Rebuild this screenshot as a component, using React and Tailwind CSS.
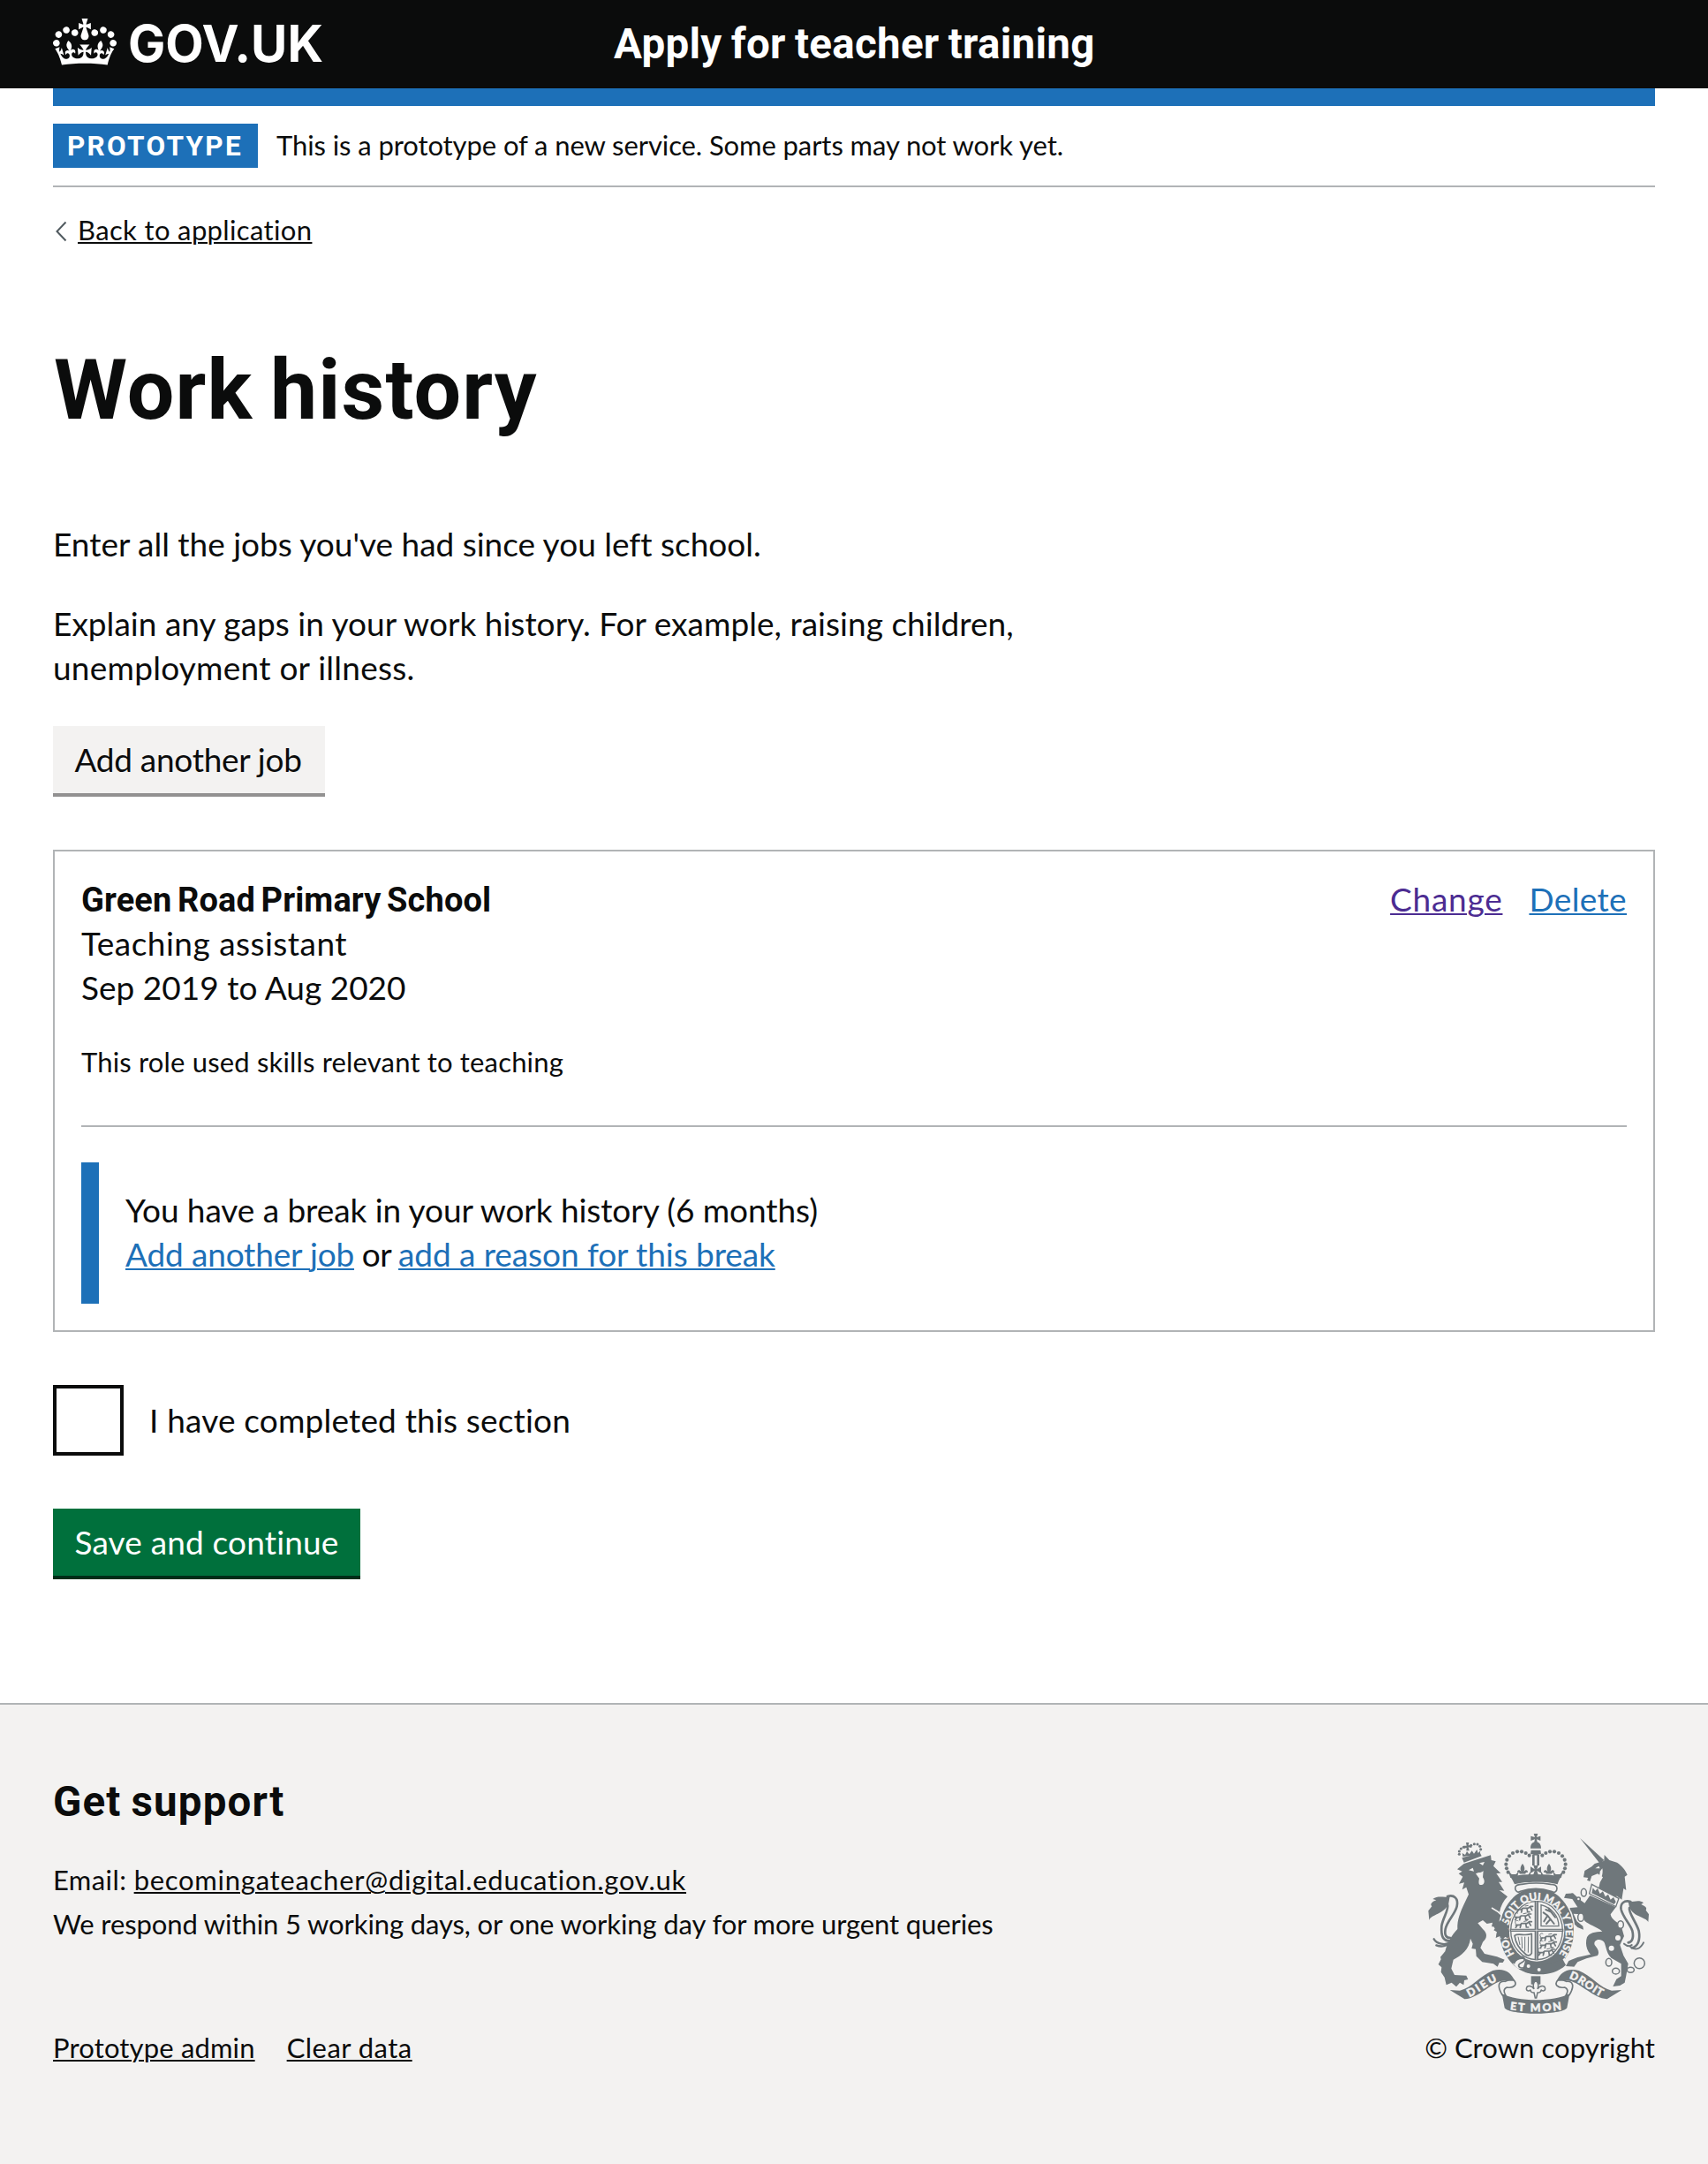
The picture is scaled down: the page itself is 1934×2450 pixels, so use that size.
import React from "react";

const INK = "#6f777b";
const PAPER = "#f3f2f1";

function CrownLogo() {
  return (
    <svg viewBox="0 0 132 97" className="mt-[21px] h-[53px] w-[72px] shrink-0" fill="currentColor" aria-hidden="true">
      <path
        fillRule="evenodd"
        d="M25 30.2c3.5 1.5 7.7-.2 9.1-3.7 1.5-3.6-.2-7.8-3.9-9.2-3.6-1.4-7.6.3-9.1 3.9-1.4 3.5.3 7.5 3.9 9zM9 39.5c3.6 1.5 7.8-.2 9.2-3.7 1.5-3.6-.2-7.8-3.9-9.1-3.6-1.5-7.6.2-9.1 3.8-1.4 3.5.3 7.5 3.8 9zM4.4 57.2c3.5 1.5 7.7-.2 9.1-3.8 1.5-3.6-.2-7.7-3.9-9.1-3.5-1.5-7.6.3-9.1 3.8-1.4 3.5.3 7.6 3.9 9.1zm38.3-21.4c3.5 1.5 7.7-.2 9.1-3.8 1.5-3.6-.2-7.7-3.9-9.1-3.6-1.5-7.6.3-9.1 3.8-1.3 3.6.4 7.7 3.9 9.1zm64.4-5.6c-3.6 1.5-7.8-.2-9.1-3.7-1.5-3.6.2-7.8 3.8-9.2 3.6-1.4 7.7.3 9.2 3.9 1.3 3.5-.4 7.5-3.9 9zm15.9 9.3c-3.6 1.5-7.7-.2-9.1-3.7-1.5-3.6.2-7.8 3.7-9.1 3.6-1.5 7.7.2 9.2 3.8 1.5 3.5-.3 7.5-3.8 9zm4.7 17.7c-3.6 1.5-7.8-.2-9.2-3.8-1.5-3.6.2-7.7 3.9-9.1 3.6-1.5 7.7.3 9.2 3.8 1.3 3.5-.4 7.6-3.9 9.1zM89.3 35.8c-3.6 1.5-7.8-.2-9.2-3.8-1.4-3.6.2-7.7 3.9-9.1 3.6-1.5 7.7.3 9.2 3.8 1.4 3.6-.3 7.7-3.9 9.1zM69.7 17.7l8.9 4.7V9.3l-8.9 2.8c-.2-.3-.5-.6-.9-.9L72.4 0H59.6l3.5 11.2c-.3.3-.6.5-.9.9l-8.8-2.8v13.1l8.8-4.7c.3.3.6.7.9.9l-5 15.4v.1c-.2.8-.4 1.6-.4 2.4 0 4.1 3.1 7.5 7 8.1h.2c.3 0 .7.1 1 .1.4 0 .7 0 1-.1h.2c4-.6 7.1-4.1 7.1-8.1 0-.8-.1-1.7-.4-2.4V34l-5.1-15.4c.4-.2.7-.6 1-.9zM66 92.8c16.9 0 32.8 1.1 47.1 3.2 4-16.9 8.9-26.7 14-33.5l-9.6-3.4c1 4.9 1.1 7.2 0 10.2-1.5-1.4-3-4.3-4.2-8.7L108.6 76c2.8-2 5-3.2 7.5-3.3-4.4 9.4-10 11.9-13.6 11.2-4.3-.8-6.3-4.6-5.6-7.9 1-4.7 5.7-5.9 8-.5 4.3-8.7-3-11.4-7.6-8.8 7.1-7.2 7.9-13.5 2.1-21.1-8 6.1-8.1 12.3-4.5 20.8-4.7-5.4-12.1-2.5-9.5 6.2 3.4-5.2 7.9-2 7.2 3.1-.6 4.3-6.4 7.8-13.5 7.2-10.3-.9-10.9-8-11.2-13.8 2.5-.5 7.1 1.8 11 7.3L80.2 60c-4.1 4.4-8 5.3-12.3 5.4 1.4-4.4 8-11.6 8-11.6H55.5s6.4 7.2 7.9 11.6c-4.2-.1-8-1-12.3-5.4l1.4 16.4c3.9-5.5 8.5-7.7 10.9-7.3-.3 5.8-.9 12.8-11.1 13.8-7.2.6-12.9-2.9-13.5-7.2-.7-5 3.8-8.3 7.1-3.1 2.7-8.7-4.6-11.6-9.4-6.2 3.7-8.5 3.6-14.7-4.6-20.8-5.8 7.6-5 13.9 2.2 21.1-4.7-2.6-11.9.1-7.7 8.8 2.3-5.5 7.1-4.2 8.1.5.7 3.3-1.3 7.1-5.7 7.9-3.5.7-9-1.8-13.5-11.2 2.5.1 4.7 1.3 7.5 3.3l-4.7-15.4c-1.2 4.4-2.7 7.2-4.3 8.7-1.1-3-.9-5.3 0-10.2l-9.5 3.4c5 6.9 9.9 16.7 14 33.5 14.8-2.1 30.8-3.2 47.7-3.2z"
      />
    </svg>
  );
}

/* Pearls along the arches of the large crown, left half; the right half is mirrored. */
const PEARLS = [[351, 196], [349, 182], [352, 167], [360, 154], [372, 144], [387, 139], [402, 139], [416, 144], [428, 152], [356, 209]];
const LION_CROWN_PEARLS = [[190, 148], [190, 138], [196, 129], [205, 124], [230, 118], [241, 113], [252, 114], [260, 121], [263, 131]];
const LINKS = [[613, 278, 9, 13], [603, 362, 10, 14], [738, 387, 10, 13], [698, 515, 10, 13], [722, 545, 12, 10], [772, 541, 12, 9], [802, 518, 18, 18], [595, 300, 6, 6]];

function Fleur({ x, y, s = 1 }) {
  return (
    <path
      transform={`translate(${x} ${y}) scale(${s})`}
      d="M0 -20C8 -10 8 -2 4 6C10 -2 18 0 17 9C14 6 10 8 9 13H-9C-10 8 -14 6 -17 9C-18 0 -10 -2 -4 6C-8 -2 -8 -10 0 -20Z"
    />
  );
}

function PassantLion({ x, y }) {
  return (
    <g transform={`translate(${x} ${y})`} fill="none" stroke={INK} strokeWidth="5" strokeLinecap="round">
      <path d="M-26 2h14l6-5h18l8-6h8M-20 2l-6 9M-8 0l-3 11M8 -3l2 13h7M18 -8l7 12" />
      <path d="M-26 -2c-6-8 2-14 8-10M2 -10l10-2" strokeWidth="3" />
    </g>
  );
}

function CoatOfArms() {
  return (
    <svg viewBox="84 78 750 612" className="h-[204px] w-[250px] overflow-visible" fill={INK} aria-hidden="true">
      <defs>
        <path id="garter" d="M378 487A98 112 0 1 1 518 500" />
        <path id="ribbon-left" d="M224 633C258 618 290 588 328 575" />
        <path id="ribbon-mid" d="M362 676Q450 688 538 676" />
        <path id="ribbon-right" d="M562 569C600 580 630 612 674 634" />
      </defs>

      {/* lion's tail */}
      <g fill="none" stroke={INK} strokeLinecap="round">
        <path strokeWidth="8" d="M150 291C172 284 188 298 182 325C176 352 150 372 143 402C139 424 146 432 160 432" />
        <path strokeWidth="8" d="M150 318C156 336 134 364 130 392C128 424 132 446 166 442" />
        <path strokeWidth="7" d="M104 436C112 450 140 462 166 444M112 457C130 464 150 458 164 446" />
      </g>
      <path d="M158 291C140 298 120 286 100 300L112 304C96 310 90 318 97 325L85 340L88 372C92 352 140 352 154 314Z" />

      {/* lion */}
      <path d="M183 199L206 180L250 166L297 151L299 168L314 172L306 188L331 212L316 213L336 242L324 242L343 272L326 270L354 292C340 306 331 324 327 344L346 368L358 396L353 432L345 428L336 436L329 424L316 430L318 412L307 406L316 394L300 394L303 380L284 384L270 372L253 382L270 402C288 418 284 434 270 446L262 466L276 486L318 496L344 506L338 516L326 516L320 530L306 520L268 514L248 494L246 470L232 468L236 452L228 434C224 470 198 492 170 506L163 536L174 558L214 560L220 573L207 576L205 592L192 584L180 598L164 584L146 592L140 566L128 548L130 532L119 522L128 505L126 497L142 478C150 446 164 424 184 402C182 372 194 344 206 318L222 284L214 260L200 268L207 244L189 248L202 224L188 214L200 206Z" />
      <path fill={PAPER} d="M222 202L236 194L240 206ZM258 178L276 174L270 186ZM246 214C256 208 266 212 272 204L270 226C280 240 274 254 264 252C254 252 256 240 258 230Z" />
      <path fill="none" stroke={PAPER} strokeWidth="5" d="M300 330C330 345 352 368 362 400" />

      {/* lion's crown */}
      <path d="M199 160L261 144L266 154L206 176ZM202 156L200 144L210 150L216 138L224 148L233 136L240 146L250 132L254 144L262 136L260 148Z" />
      <path d="M213 108H223L221 118L232 116V126L221 124L224 136H214L215 126L206 128V119L215 119Z" />
      {LION_CROWN_PEARLS.map(([x, y]) => <circle key={`${x}-${y}`} cx={x} cy={y} r="4.6" />)}

      {/* unicorn's tail */}
      <g fill="none" stroke={INK} strokeLinecap="round">
        <path strokeWidth="8" d="M772 309C750 302 736 316 740 336C746 362 770 384 778 408C784 434 776 446 764 448" />
        <path strokeWidth="8" d="M768 330C764 346 792 380 800 408C806 440 796 462 776 466" />
        <path strokeWidth="6" d="M816 448C806 468 790 478 768 460M750 452C762 462 770 462 776 456" />
      </g>
      <path d="M764 309C780 312 800 300 816 313L808 318C824 326 828 330 824 338L834 352L832 378C822 360 782 362 768 328Z" />

      {/* unicorn */}
      <path d="M600 93L682 168L668 180Z" />
      <path d="M612 226L616 204L640 190L650 180L682 170L683 150L700 168L726 176C744 188 756 204 761 218L752 224L757 270L748 264L742 302L726 290L712 292L690 276L664 262L668 244L678 226L660 214L640 222L634 240L624 236L628 228Z" />
      <path fill={PAPER} d="M652 196L664 188L668 196ZM676 196C680 214 672 240 654 252L648 250C660 240 668 220 668 206Z" />
      <path d="M634 288L722 328L704 352C706 372 732 378 742 398L750 426L736 456L748 492L764 520L757 560L752 584L736 594L712 597L724 572L740 562L740 520L706 500C688 480 690 462 682 446C668 430 644 440 650 456C660 468 668 480 660 492L622 502L592 514L580 530L552 528L562 510L592 498L636 488C620 470 618 448 624 430C630 414 652 412 676 410C658 394 628 386 616 374L606 352L578 350L590 376L610 392L612 404L592 396L570 374L560 352L566 330L592 328L574 300L546 296L552 282L576 280L600 302L616 314Z" />
      <path fill={PAPER} stroke={INK} strokeWidth="4" d="M640 250L732 298L722 326L632 282Z" />
      <path d="M644 262L652 272L660 264L668 282L678 274L686 292L696 284L704 302L714 294L722 310L716 318L640 280Z" />
      <circle cx="729" cy="432" r="9" fill={PAPER} />
      <circle cx="707" cy="467" r="9" fill={PAPER} />
      {LINKS.map(([x, y, rx, ry]) => <ellipse key={`${x}-${y}`} cx={x} cy={y} rx={rx} ry={ry} fill={PAPER} stroke={INK} strokeWidth="4.5" />)}

      {/* garter and shield */}
      <ellipse cx="453" cy="409" rx="131" ry="151" fill={PAPER} />
      <ellipse cx="453" cy="409" rx="126" ry="147" />
      <ellipse cx="453" cy="407" rx="94" ry="105" fill={PAPER} />
      <ellipse cx="453" cy="407" rx="88" ry="99" fill="none" stroke={INK} strokeWidth="4" />
      <path d="M446 306H459V508H446ZM362 401H544V411H362Z" />
      <path stroke={PAPER} strokeWidth="2" d="M452.500 308V506M366 406H540" />
      <PassantLion x={412} y={334} />
      <PassantLion x={406} y={360} />
      <PassantLion x={408} y={386} />
      <PassantLion x={492} y={430} />
      <PassantLion x={492} y={455} />
      <PassantLion x={486} y={480} />
      <path fill="none" stroke={INK} strokeWidth="4" d="M468 320V392H528C528 360 506 330 468 320Z" />
      <path fill="none" stroke={INK} strokeWidth="6" strokeLinecap="round" d="M476 346L490 356L512 384M490 356L478 376M500 368L486 384M484 336L502 344L516 362M502 344L494 332" />
      <path fill="none" stroke={INK} strokeWidth="5" strokeLinejoin="round" d="M378 424C392 414 412 428 436 418V484C430 496 418 492 414 486C396 472 382 452 378 424Z" />
      <path stroke={INK} strokeWidth="3" d="M390 428L396 456M402 428L404 468M413 428L413 478M425 428L424 482" />
      <path fill={PAPER} d="M372 520C396 496 420 502 412 520C470 540 520 520 548 500L556 512C520 548 440 552 404 536C384 540 384 530 372 520Z" />
      <path d="M414 512C460 534 510 522 540 502L552 524C510 564 440 562 404 542Z" />
      <path fill="none" stroke={INK} strokeWidth="5" d="M376 520C384 498 408 488 412 504C414 514 396 516 392 524C390 534 404 536 410 532" />
      <circle cx="425" cy="528" r="6" fill={PAPER} />
      <circle cx="461" cy="540" r="6" fill={PAPER} />
      <text className="font-['Lato'] text-[35px] font-black" fill={PAPER} stroke={PAPER} strokeWidth="1">
        <textPath href="#garter" textLength="482" lengthAdjust="spacing">HONI SOIT QUI MAL Y PENSE</textPath>
      </text>
      <path d="M306 392L330 372L350 384L360 410L356 434L346 428L336 440L328 426L314 432L318 412Z" />

      {/* royal crown */}
      <path
        fill={PAPER}
        stroke={INK}
        strokeWidth="5"
        d="M380 263C380 251 392 251 402 250C432 245 470 245 500 250C512 251 522 252 522 264C522 276 512 280 502 274C470 263 430 263 398 274C388 280 380 272 380 263Z"
      />
      <path d="M364 224C390 218 420 216 450 216C480 216 510 218 536 224C530 234 526 240 524 250C490 240 412 240 378 250C374 240 370 234 364 224Z" />
      <path d="M356 204L368 216H382L392 208L388 222H422L432 206V222H468V206L478 222H512L508 208L518 216H532L544 204L536 228H364Z" />
      <path d="M432 190L446 199L442 186H458L454 199L468 190V212L454 204L460 222H440L446 204L432 212Z" />
      <Fleur x={405} y={201} s={1.05} />
      <Fleur x={495} y={201} s={1.05} />
      <path d="M438 150H446V186H438ZM454 150H462V186H454ZM434 134H466L468 146L450 152L432 146Z" />
      <path d="M432 128C432 112 440 106 450 106C460 106 468 112 468 128ZM443 78H457L453 90L466 86V102L453 97L456 110H444L447 97L433 102V86L447 90Z" />
      {PEARLS.map(([x, y]) => (
        <g key={`${x}-${y}`}>
          <circle cx={x} cy={y} r="6.200" />
          <circle cx={900 - x} cy={y} r="6.200" />
        </g>
      ))}

      {/* motto ribbon */}
      <path fill={PAPER} stroke={INK} strokeWidth="5" d="M336 626C318 596 322 578 346 580C358 576 366 566 374 574C390 590 376 604 352 600C340 604 340 616 348 628Z" />
      <path fill={PAPER} stroke={INK} strokeWidth="5" d="M564 626C582 596 578 578 554 580C542 576 534 566 526 574C510 590 524 604 548 600C560 604 560 616 552 628Z" />
      <path d="M158 609L192 611C232 602 262 560 304 543C342 532 368 550 378 578L350 578C310 570 262 636 208 640Z" />
      <path d="M742 609L708 611C668 602 638 560 596 543C558 532 532 550 522 578L550 578C590 570 638 636 692 640Z" />
      <path d="M335 622C390 650 510 650 565 622L556 670C540 696 360 696 344 670Z" />
      <g fill={PAPER} stroke={PAPER} strokeWidth="1.500" className="font-['Lato'] text-[37px] font-black">
        <text><textPath href="#ribbon-left" textLength="110">DIEU</textPath></text>
        <text><textPath href="#ribbon-mid" textLength="176">ET MON</textPath></text>
        <text><textPath href="#ribbon-right" textLength="126">DROIT</textPath></text>
      </g>
      <path d="M434 562H466V590H434Z" />
      <path fill={PAPER} stroke={INK} strokeWidth="4.500" d="M450 576C460 586 460 596 456 606C464 592 482 592 482 606C480 616 470 612 468 608C468 616 462 618 456 618L452 636H448L444 618C438 618 432 616 432 608C430 612 420 616 418 606C418 592 436 592 444 606C440 596 440 586 450 576Z" />
    </svg>
  );
}

function Link({ children, className }) {
  return (
    <a href="#" className={`underline decoration-2 underline-offset-[2px] ${className}`}>
      {children}
    </a>
  );
}

export default function App() {
  return (
    <div className="flex min-h-[2450px] w-full flex-col bg-white font-['Lato',sans-serif] text-[37px] leading-[50px] text-[#0b0c0c]">
      <header className="h-[100px] bg-[#0b0c0c] px-[60px] text-white">
        <div className="flex">
          <div className="flex w-[635px]">
            <CrownLogo />
            <svg viewBox="0 0 230 100" className="ml-[12px] h-[100px] w-[230px]" fill="currentColor">
              <text x="1" y="70" textLength="221" lengthAdjust="spacingAndGlyphs" className="font-['Inter'] text-[57.500px] font-bold">GOV.UK</text>
            </svg>
          </div>
          <div className="mt-[20px] font-['Roboto'] text-[47.500px] leading-[60px] font-bold tracking-[0.300px] [word-spacing:-2px]">Apply for teacher training</div>
        </div>
      </header>

      <div className="mx-[60px] h-[20px] bg-[#1d70b8]" />
      <div className="mx-[60px] flex border-b-2 border-[#b1b4b6] py-[20px]">
        <strong className="h-[50px] w-[232px] bg-[#1d70b8] pl-[16px] font-['Roboto'] text-[31.500px] leading-[52px] tracking-[2.300px] text-white">PROTOTYPE</strong>
        <span className="ml-[21px] mt-[-1px] text-[31px] tracking-[-0.090px]">This is a prototype of a new service. Some parts may not work yet.</span>
      </div>

      <main className="mx-[60px]">
        <div className="mt-[23px] flex h-[50px] text-[31px]">
          <svg viewBox="0 0 28 50" className="h-[50px] w-[28px]" fill="none" stroke="#505a5f" strokeWidth="2">
            <path d="M14.500 16.500L4.500 27L14.500 37.500" />
          </svg>
          <Link className="tracking-[0.360px]">Back to application</Link>
        </div>

        <h1 className="mt-[107px] pl-[1px] font-['Roboto'] text-[95px] leading-[100px] font-bold tracking-[1.100px] [word-spacing:-5px]">Work history</h1>

        <p className="mt-[99px] tracking-[-0.010px]">Enter all the jobs you've had since you left school.</p>
        <p className="mt-[40px] tracking-[0.030px]">
          Explain any gaps in your work history. For example, raising children,
          <br />
          <span className="tracking-[0.240px]">unemployment or illness.</span>
        </p>

        <button type="button" className="mt-[41px] block h-[80px] w-[308px] border-b-4 border-[#929191] bg-[#f3f2f1] pt-[13px] pr-[2px] pb-[13px] text-center leading-[50px] tracking-[-0.280px]">
          Add another job
        </button>

        <section className="mt-[60px] h-[546px] border-2 border-[#b1b4b6] px-[30px] pt-[30px]">
          <div className="flex justify-between">
            <div>
              <h2 className="font-['Roboto'] text-[38px] font-bold tracking-[0.120px] [word-spacing:-3px]">Green Road Primary School</h2>
              <p className="-mt-px tracking-[0.480px]">Teaching assistant</p>
              <p className="tracking-[0.020px]">Sep 2019 to Aug 2020</p>
            </div>
            <div className="-mt-px flex gap-[30px]">
              <Link className="tracking-[0.750px] text-[#4c2c92]">Change</Link>
              <Link className="tracking-[0.380px] text-[#1d70b8]">Delete</Link>
            </div>
          </div>
          <p className="mt-[39px] text-[31px] leading-[40px] tracking-[0.170px]">This role used skills relevant to teaching</p>
          <hr className="mt-[52px] border-0 border-t-2 border-[#b1b4b6]" />
          <div className="mt-[40px] h-[160px] border-l-[20px] border-[#1d70b8] pt-[29px] pl-[30px]">
            <p className="tracking-[-0.070px]">You have a break in your work history (6 months)</p>
            <p className="tracking-[-0.650px]">
              <Link className="tracking-[-0.160px] text-[#1d70b8]">Add another job</Link> or <Link className="tracking-[-0.080px] text-[#1d70b8]">add a reason for this break</Link>
            </p>
          </div>
        </section>

        <label className="mt-[60px] flex h-[80px]">
          <span className="h-[80px] w-[80px] border-4 border-[#0b0c0c] bg-white" />
          <span className="mt-[15px] ml-[29px] tracking-[0.180px]">I have completed this section</span>
        </label>

        <button type="button" className="mt-[60px] mb-[140px] block h-[80px] w-[348px] border-b-4 border-[#002d18] bg-[#00703c] pt-[13px] pb-[13px] text-center leading-[50px] tracking-[0.170px] text-white">
          Save and continue
        </button>
      </main>

      <footer className="flex-1 border-t-2 border-[#b1b4b6] bg-[#f3f2f1] px-[60px] pt-[80px] text-[31px]">
        <div className="flex items-end justify-between">
          <div>
            <h2 className="font-['Roboto'] text-[47.500px] leading-[60px] font-bold tracking-[1.150px] [word-spacing:-2px]">Get support</h2>
            <p className="mt-[33px]">
              <span className="tracking-[0.400px]">Email: </span>
              <Link className="tracking-[0.730px]">becomingateacher@digital.education.gov.uk</Link>
            </p>
            <p className="tracking-[-0.105px]">We respond within 5 working days, or one working day for more urgent queries</p>
            <div className="mt-[95px] flex gap-[36px] leading-[40px]">
              <Link className="tracking-[0.150px]">Prototype admin</Link>
              <Link className="tracking-[0.460px]">Clear data</Link>
            </div>
          </div>
          <div className="flex flex-col items-center">
            <div className="mr-[3px] h-[204px]">
              <CoatOfArms />
            </div>
            <div className="mt-[18px] leading-[40px] tracking-[0.050px]">© Crown copyright</div>
          </div>
        </div>
      </footer>
    </div>
  );
}
